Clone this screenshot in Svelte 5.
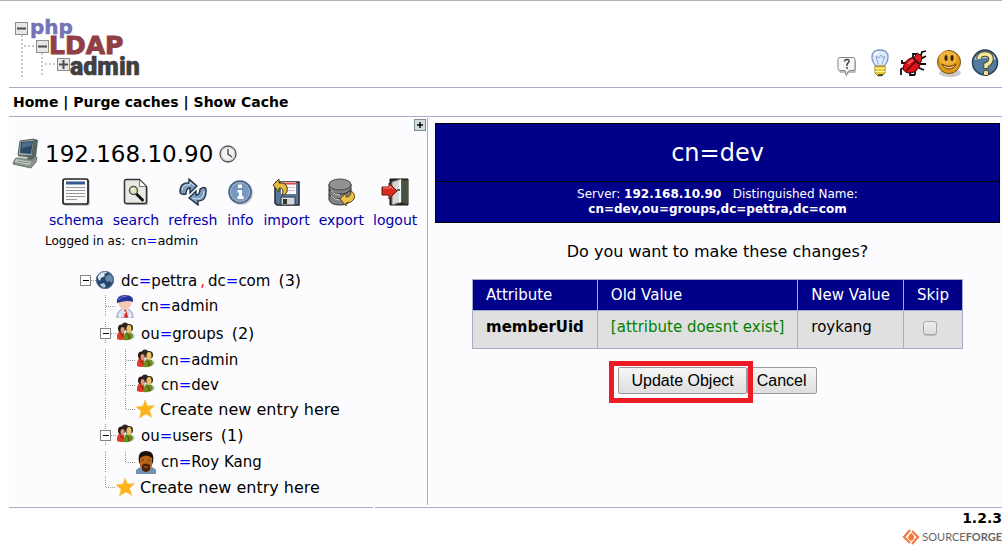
<script>
  const nav = ['Home', 'Purge caches', 'Show Cache'];
  const tools = ['schema', 'search', 'refresh', 'info', 'import', 'export', 'logout'];
  const tree = [
    { lines: ['open-root'], icon: 'globe', parts: ['dc', '=', 'pettra', ',', 'dc', '=', 'com'], count: 3 },
    { lines: ['blank', 'tee'], icon: 'person', parts: ['cn', '=', 'admin'] },
    { lines: ['blank', 'open'], icon: 'group', parts: ['ou', '=', 'groups'], count: 2 },
    { lines: ['blank', 'bar', 'tee'], icon: 'group', parts: ['cn', '=', 'admin'] },
    { lines: ['blank', 'bar', 'tee'], icon: 'group', parts: ['cn', '=', 'dev'] },
    { lines: ['blank', 'bar', 'end'], icon: 'star', parts: ['Create new entry here'] },
    { lines: ['blank', 'open'], icon: 'group', parts: ['ou', '=', 'users'], count: 1 },
    { lines: ['blank', 'bar', 'end'], icon: 'man', parts: ['cn', '=', 'Roy Kang'] },
    { lines: ['blank', 'end'], icon: 'star', parts: ['Create new entry here'] }
  ];
  let skip = $state(false);
</script>

{#snippet treeLine(kind)}
  <svg class="line" viewBox="0 0 20 26" aria-hidden="true">
    <g fill="none" stroke="#999" stroke-dasharray="1 1">
      {#if kind === 'bar' || kind === 'tee'}<path d="M9.500 2v22" />{/if}
      {#if kind === 'end'}<path d="M9.500 2v12" />{/if}
      {#if kind === 'tee' || kind === 'end'}<path d="M10 13.500h10" />{/if}
      {#if kind === 'open'}<path d="M9.500 2v22M15 13.500h5" />{/if}
      {#if kind === 'open-root'}<path d="M15 13.500h5" />{/if}
    </g>
    {#if kind.startsWith('open')}
      <rect x="4.500" y="8.500" width="10" height="10" fill="#fff" stroke="#848484" />
      <path d="M7 13.500h6" stroke="#000" />
    {/if}
  </svg>
{/snippet}

{#snippet treeIcon(kind)}
  <svg class="entry-icon" viewBox="1 0 20 24" aria-hidden="true">
    {#if kind === 'globe'}
      <circle cx="10" cy="12" r="9" fill="#24456f" />
      <path d="M3 8q3-5 8-5l1 2-3 1 1 2-4 2-1 3-2-2z" fill="#dce8f1" />
      <path d="M11 8l4-2 3 4-1 5-3-2-2 1-2-3z" fill="#6689ae" />
      <path d="M5 16l4-1 2 3-2 2-3-2z" fill="#a9c3da" />
      <circle cx="10" cy="12" r="8.500" fill="none" stroke="#5b7797" />
    {:else if kind === 'person'}
      <path d="M2 24q0-8 6-9h4q6 1 6 9z" fill="#d8dcef" stroke="#9297bb" />
      <ellipse cx="10" cy="9" rx="6.500" ry="6.500" fill="#f6c9b2" />
      <path d="M2 9q-1-8 8-8t8 7q-5-2-12 0z" fill="#25349b" />
      <path d="M3 6q3-4 9-4" stroke="#7180d5" fill="none" />
      <path d="m9 16h3v3l1 4-2 1-2-1 1-4z" fill="#d22a28" />
      <path d="m7 15 3 4 3-4M5 19v5M15 19v5" fill="none" stroke="#fff" />
    {:else if kind === 'group'}
      <ellipse cx="11" cy="15" rx="9" ry="4" fill="#c9cbc5" />
      <path d="M2 16q0-7 6-6l3 8q-5 2-9 0z" fill="#e33b23" />
      <path d="M9 18q0-7 4-7 5 0 5 5-3 4-9 3z" fill="#64931d" />
      <ellipse cx="6.500" cy="7.500" rx="3.500" ry="4" fill="#2b1713" />
      <ellipse cx="7.500" cy="9" rx="2" ry="3" fill="#df9877" />
      <ellipse cx="10" cy="4" rx="3" ry="2.500" fill="#302520" />
      <ellipse cx="14" cy="7" rx="4" ry="4" fill="#2d241b" />
      <ellipse cx="14" cy="8" rx="2.500" ry="4" fill="#e8c56c" />
      <path d="M5 13q3 0 3 3M12 13q3 1 2 5" stroke="#7c210c" fill="none" />
    {:else if kind === 'star'}
      <path d="m10 3 2.500 6 7-.5-5 5 2.500 7-6-3.500-6.500 4 1.500-7-5-4 7-1z" fill="#fbb21b" stroke="#ffc95f" stroke-width=".7" />
    {:else}
      <path d="M1 24v-4q3-3 6-3h8q4 0 6 3v4z" fill="#758eb6" />
      <path d="M4 12q-2-11 7-11t7 11l-2 5H6z" fill="#17100c" />
      <path d="M5 8q6-5 12 0v8q-3 6-6 6t-6-6z" fill="#b96519" />
      <path d="M7 15q4-3 8 0v5q-4 4-8 0z" fill="#4d230d" />
      <path d="M9 17h4" stroke="#c16a28" /><path d="M7 10h2M13 10h2" stroke="#5c2b0c" />
    {/if}
  </svg>
{/snippet}

{#snippet toolIcon(kind)}
  <svg width="28" height="28" viewBox="0 0 28 28" aria-hidden="true">
    {#if kind === 'schema'}
      <rect x="2" y="2" width="26" height="26" rx="2" fill="#c9c9ce" />
      <rect x="1" y="1" width="25" height="25" rx="2" fill="#f8f8f8" stroke="#222" stroke-width="1.700" />
      <path d="M4 5h19" stroke="#365b91" stroke-width="3" />
      <path d="M4 9.500h19M4 12.500h19M4 15.500h19M4 18.500h19M4 21.500h11" stroke="#999" />
    {:else if kind === 'search'}
      <path d="M3 2h15l7 7v17H3z" fill="#bbb" transform="translate(1 1)" />
      <path d="M2.500 3.500q0-2 2-2h13l7 7v15q0 2-2 2h-18q-2 0-2-2z" fill="#e8e8e3" stroke="#333" stroke-width="1.500" />
      <path d="M17.500 2v6.500H24" fill="#fff" stroke="#777" />
      <path d="m14.500 16 6 6" stroke="#111" stroke-width="3" stroke-linecap="round" />
      <circle cx="11.500" cy="12.500" r="4" fill="#dde4b6" stroke="#555" stroke-width="1.500" />
      <path d="M9 12q0-2 3-2" fill="none" stroke="#fff" />
    {:else if kind === 'refresh'}
      <path d="M1 14Q1 4 10 5V1l8 7-7 7v-5q-4 0-4 6-6 1-6-2z" fill="#7c9dbf" stroke="#1c2c3d" stroke-width="1.300" />
      <path d="M27 11q1 12-8 12v4l-9-7 7-7v4q4 0 4-6 5-3 6 0z" fill="#7c9dbf" stroke="#1c2c3d" stroke-width="1.300" />
      <path d="M3 12q1-6 8-5V4l4 4M25 13q0 8-7 8l-5-1" fill="none" stroke="#cedeeb" />
    {:else if kind === 'info'}
      <circle cx="15" cy="15" r="12" fill="#c4c6ca" />
      <circle cx="14" cy="14" r="11" fill="#7897bf" stroke="#45617f" stroke-width="1.500" />
      <circle cx="14" cy="14" r="9.500" fill="none" stroke="#9ab3d2" />
      <rect x="12" y="6.500" width="4" height="3.500" rx="1" fill="#fff" />
      <path d="M11.500 12h4.500v6h1.500v3h-6v-3h1.500v-3.500h-1.500z" fill="#fff" />
    {:else if kind === 'import'}
      <path d="M3 4h23v23H4l-2-2V6z" fill="#55779e" stroke="#20262d" stroke-width="1.500" />
      <path d="M8 4h15v12H8z" fill="#fafafa" /><path d="M9 5.500h14" stroke="#e24747" stroke-width="2" />
      <path d="M9 9.500h13M9 12.500h13" stroke="#c6c6ca" />
      <path d="M8 19h14v8H8z" fill="#d4d6d6" stroke="#2e3840" /><path d="M10 21h4v5h-4z" fill="#333" />
      <path d="M0 7 6 1v4q10-1 8 9-2 4-5 3 3-7-3-7v4z" fill="#e3b943" stroke="#493612" />
    {:else if kind === 'export'}
      <path d="M2 6v16q2 5 11 5t11-5V6z" fill="#828282" stroke="#333" />
      <path d="M2 11q3 5 11 5t11-5M2 16q3 5 11 5t11-5" fill="none" stroke="#3c3c3c" stroke-width="1.300" />
      <path d="M4 13q4 4 9 4M4 18q4 4 9 4" fill="none" stroke="#d0d0d0" />
      <ellipse cx="13" cy="6.500" rx="11" ry="5.500" fill="#929292" stroke="#444" />
      <path d="M13 21l6-6v4q5 0 5-6 5 3 3 8-2 4-8 4v3z" fill="#eac04c" stroke="#60440e" />
    {:else}
      <path d="M9 1h18v26H9z" fill="#29332b" stroke="#111" />
      <path d="M21 2h6v24l-8-2z" fill="#46533d" />
      <path d="M11 4 20 1v23l-9 3z" fill="#d8d8d8" stroke="#777" />
      <path d="m18 3 2-2v23l-2 1z" fill="#f5f5f5" /><path d="M16 12h3" stroke="#333" stroke-width="1.500" />
      <path d="M1 9h7V5l8 8-8 8v-4H1z" fill="#d52c1e" stroke="#65150e" />
      <path d="M2 10h7V8l3 3" fill="none" stroke="#ff8477" />
    {/if}
  </svg>
{/snippet}

<div class="page">
  <header>
    <svg class="logo" width="140" height="68" viewBox="0 0 140 68" role="img" aria-label="phpLDAPadmin">
      <g stroke="#c8c8c8" stroke-width="2" stroke-dasharray="2 2" fill="none">
        <path d="M13 22v42M33 40v24M15 33h14M36 51h12" />
      </g>
      <g fill="#e6e6e6" stroke="#8c8c8c">
        <rect x="6.500" y="9.500" width="12" height="12" /><rect x="27.500" y="27.500" width="12" height="12" /><rect x="48.500" y="45.500" width="12" height="12" />
      </g>
      <path d="M8 15.500h9M29 33.500h9M50 51.500h9M54.500 47v9" stroke="#4c4c4c" stroke-width="2" />
      <text class="php" x="21" y="21">php</text>
      <text class="ldap" x="40" y="41">LDAP</text>
      <text class="adm" x="61" y="62">admin</text>
    </svg>
    <div class="quick">
      <button aria-label="Request feature">
        <svg width="20" height="28" viewBox="0 0 20 28"><path d="M3 10h14q2 0 2 2v9q0 2-2 2h-5l-3 4-1-4H4q-2 0-2-2v-9z" fill="#bbb" transform="translate(0 1)" /><path d="M3 8.500h13q2 0 2 2v9q0 2-2 2h-4l-3 4-1-4H3q-2 0-2-2v-9q0-2 2-2z" fill="#f6f6f6" stroke="#888" /><path d="M7.500 12.500q0-2 2.500-2t2 2q0 1-2 2.500v2M10 18v2" fill="none" stroke="#444" stroke-width="1.500" /></svg>
      </button>
      <button aria-label="Show hints">
        <svg width="20" height="28" viewBox="0 0 20 28"><path d="M6 17Q2 13 2 8q0-7 8-7t8 7q0 5-4 9z" fill="#dce9fa" stroke="#7898c9" stroke-width="1.300" /><path d="M8 15 6 7l3 2 2-3 2 3 2-2-3 8" fill="none" stroke="#8faad0" /><path d="M5 6q1-3 4-3" stroke="#fff" stroke-width="2" fill="none" /><path d="M5 17h10v7l-3 3H8l-3-3z" fill="#edcc38" stroke="#9f8525" /><path d="M5 19.500h10M5 22.500h10" stroke="#fff09a" /><path d="M8 25h5v2H8z" fill="#55513e" /></svg>
      </button>
      <button aria-label="Report a bug">
        <svg width="28" height="28" viewBox="0 0 28 28"><path d="M8 14H3v-3M7 18l-5 2v6M11 21v5h5M14 9V5h4M20 15h7M18 18l7 3M21 9l2-6 4-1M22 10l5-3M16 20v6" fill="none" stroke="#111" stroke-width="1.800" /><path d="M4 20Q5 10 15 8l6 4q1 7-6 11-8 3-11-3z" fill="#e01019" stroke="#3b080b" /><path d="m15 9 3-5 5 3-1 6-3 2z" fill="#e61c22" stroke="#2b0b0b" /><path d="M7 22 18 11M14 9l6 5" stroke="#420b10" stroke-width="1.300" /><path d="m9 15 5-4" stroke="#ff7a7a" stroke-width="1.500" /></svg>
      </button>
      <button aria-label="Donate">
        <svg width="26" height="28" viewBox="0 0 26 28"><ellipse cx="14" cy="24" rx="11" ry="4" fill="#c8c8c8" /><circle cx="13" cy="13" r="11.500" fill="#e0971c" stroke="#71501b" /><ellipse cx="12" cy="9" rx="9" ry="7" fill="#f0b23a" /><ellipse cx="10" cy="9" rx="1.500" ry="3" fill="#392407" /><ellipse cx="16" cy="9" rx="1.500" ry="3" fill="#392407" /><path d="M6 15q7 5 14 0-2 5-7 5t-7-5z" fill="#f7cf78" stroke="#60400e" /></svg>
      </button>
      <button aria-label="Help">
        <svg width="28" height="28" viewBox="0 0 28 28"><circle cx="14" cy="13.500" r="12.500" fill="#527ba0" stroke="#283f55" stroke-width="1.500" /><path d="M3 11Q7 1 17 3q7 2 8 8-9-4-22 0z" fill="#b9ccdd" /><path d="M8 10q0-5 6-5t6 5q0 4-5 6v4" fill="none" stroke="#4e4a30" stroke-width="5.500" /><path d="M8 10q0-5 6-5t6 5q0 4-5 6v3" fill="none" stroke="#f4e6a1" stroke-width="3.500" /><rect x="12.500" y="21.500" width="5" height="5" rx="1.500" fill="#f4e6a1" stroke="#4e4a30" /></svg>
      </button>
    </div>
  </header>

  <nav>
    {#each nav as item, i}{#if i}<span>&nbsp;|&nbsp;</span>{/if}<a href="#{item.split(' ')[0].toLowerCase()}">{item}</a>{/each}
  </nav>

  <div class="body">
    <aside>
      <button class="expand" aria-label="Expand tree">
        <svg width="12" height="12" viewBox="0 0 12 12"><rect x=".5" y=".5" width="11" height="11" fill="#d3dde0" stroke="#7c8c93" /><path d="M3 6h6M6 3v6" stroke="#000" stroke-width="1.400" /></svg>
      </button>
      <div class="server">
        <svg width="28" height="32" viewBox="0 0 28 32" aria-hidden="true"><path d="m8 3 15-2 3 1-2 17-4 3-14-2z" fill="#59655f" /><path d="m8 3 14-2-2 17-14-1z" fill="#a3ada6" stroke="#58625c" /><path d="m9 4 12-1-2 13-11-1z" fill="#2c4a66" /><path d="m10 5 10-1-1 4q-5 0-9 3z" fill="#4c6d8a" /><path d="m4 20 17 2 4-3-1 5-5 6-18-4 1-3z" fill="#8b958e" stroke="#68736d" /><path d="m4 21 15 3-2 3-14-3zM6 18l10 1-1 2-9-1z" fill="#c5ccc6" /><path d="m5 23 12 2" stroke="#7e8983" /></svg>
        <h2>192.168.10.90</h2>
        <svg width="20" height="20" viewBox="0 0 20 20" aria-hidden="true"><circle cx="10" cy="10" r="8" fill="#f3f3f3" stroke="#555" stroke-width="1.300" /><circle cx="10" cy="10" r="6.500" fill="none" stroke="#ccc" /><path d="M10 5v5l4 3" fill="none" stroke="#555" stroke-width="1.500" /></svg>
      </div>
      <div class="tools">
        {#each tools as tool}
          <a href="#{tool}">{@render toolIcon(tool)}<span>{tool}</span></a>
        {/each}
      </div>
      <p class="login">Logged in as: <a href="#me">cn<i>=</i>admin</a></p>
      <ul>
        {#each tree as row}
          <li class={row.icon} class:folder={row.count}>
            {#each row.lines as line}{@render treeLine(line)}{/each}
            {@render treeIcon(row.icon)}
            <a href="#entry">{#each row.parts as part}{#if part === '='}<i>=</i>{:else if part === ','}<b>,</b>{:else}{part}{/if}{/each}{#if row.count}<span class="count">({row.count})</span>{/if}</a>
          </li>
        {/each}
      </ul>
    </aside>

    <main>
      <h1>cn=dev</h1>
      <p class="subtitle">Server: <strong>192.168.10.90</strong> &nbsp; Distinguished Name:<br /><strong>cn=dev,ou=groups,dc=pettra,dc=com</strong></p>
      <form onsubmit={(e) => e.preventDefault()}>
        <p class="question">Do you want to make these changes?</p>
        <table>
          <thead>
            <tr><th>Attribute</th><th>Old Value</th><th>New Value</th><th>Skip</th></tr>
          </thead>
          <tbody>
            <tr>
              <td><strong>memberUid</strong></td>
              <td class="missing">[attribute doesnt exist]</td>
              <td>roykang</td>
              <td class="skip"><input type="checkbox" aria-label="Skip memberUid" bind:checked={skip} /></td>
            </tr>
          </tbody>
        </table>
        <div class="actions">
          <span class="marked"><button type="submit">Update Object</button></span><button type="button">Cancel</button>
        </div>
      </form>
    </main>
  </div>

  <footer>
    <div class="rule"><span></span><span></span></div>
    <strong>1.2.3</strong>
    <a class="sf" href="#sourceforge">
      <svg width="18" height="18" viewBox="0 0 18 18" aria-hidden="true"><path d="M8 2 2 9l6 6M10 3l6 6-6 7" fill="none" stroke="#f47b3b" stroke-width="2.200" /><path d="M9 5q4 3 3 5-1 3-3 3t-3-3q0-2 3-5z" fill="#f47b3b" /></svg>
      <span>SOURCE<b>FORGE</b></span>
    </a>
  </footer>
</div>

<style>
  :global(body) { background: #fff; }
  .page { font-family: "DejaVu Sans", Verdana, sans-serif; font-size: 15px; color: #000; padding-left: 9px; border-top: 1px solid #b3b3b3; overflow: hidden; }
  h1, h2, p, ul { margin: 0; padding: 0; font-weight: 400; }
  a { color: inherit; text-decoration: none; }
  i { font-style: normal; color: #00f; }
  svg { display: block; flex: none; }
  button { font-family: "Liberation Sans", Arial, sans-serif; }

  header { display: flex; justify-content: space-between; align-items: flex-end; height: 80px; padding: 0 3px 6px 0; border-bottom: 1px solid #aaaacc; }
  .logo .php { font: 700 20px "DejaVu Sans", sans-serif; fill: #7373b5; stroke: #7373b5; stroke-width: .5; }
  .logo .ldap { font: 700 25px "DejaVu Sans", sans-serif; fill: #903f46; stroke: #903f46; stroke-width: 1; }
  .logo .adm { font: 900 25px Roboto, sans-serif; fill: #404040; stroke: #404040; stroke-width: .5; }
  .quick { display: flex; align-items: center; gap: 9px; padding-bottom: 4px; }
  .quick button, .expand { padding: 0; border: 0; background: none; }
  .quick button:first-child { margin-right: 4px; }

  nav { height: 28px; line-height: 28px; padding-left: 4px; font-size: 14px; font-weight: 700; border-bottom: 1px solid #aaaacc; }

  .body { display: grid; grid-template-columns: 419fr 574fr; margin-top: 1px; }
  aside { position: relative; background: #fcfcfe; border-right: 1px solid #aaaacc; padding: 20px 0 6px 3px; }
  .expand { position: absolute; top: 1px; right: 1px; }
  .server { display: flex; align-items: center; gap: 5px; height: 32px; }
  h2 { font-size: 23px; }
  .tools { display: flex; gap: 9px; padding: 8px 0 0 37px; }
  .tools a { display: flex; flex-direction: column; align-items: center; gap: 4px; font-size: 14px; line-height: 20px; color: #0000aa; }
  .login { padding-left: 33px; font-size: 12px; line-height: 22px; }
  .login a { font-size: 13px; padding-left: 2px; }
  ul { list-style: none; padding: 15px 0 0 64px; }
  li { display: flex; align-items: center; height: 26px; }
  li.group { height: 25px; }
  li.group.folder { height: 28px; }
  li.star { height: 24px; }
  li a { padding-left: 5px; white-space: nowrap; }
  li.star a { font-size: 16px; padding-left: 4px; }
  li b { font-weight: 400; color: #f00; padding: 0 3px; }
  .count { font-size: 16px; padding-left: 8px; }
  .line { width: 20px; height: 26px; }
  .entry-icon { width: 20px; height: 24px; }

  main { background: #fcfcfe; padding: 5px 2px 0 7px; text-align: center; }
  h1 { background: #000088; color: #fff; border: 1px solid #000; font-size: 24px; line-height: 56px; padding-top: 1px; }
  .subtitle { background: #000088; color: #fff; border: 1px solid #000; border-top: 0; font-size: 12px; line-height: 15px; padding: 5px 0; }
  .question { font-size: 16px; line-height: 20px; padding: 19px 0 17px; }
  table { margin: 0 auto; border-collapse: collapse; text-align: left; }
  th, td { border: 1px solid #aaaacc; padding: 0 13px; font-weight: 400; line-height: 18px; white-space: nowrap; }
  th { background: #000088; color: #fff; padding-top: 6px; padding-bottom: 6px; }
  td { background: #e0e0e0; padding-top: 7px; padding-bottom: 12px; }
  .missing { color: #008000; }
  .skip { padding-right: 20px; }
  input { appearance: none; display: block; width: 14px; height: 14px; margin: 1px auto 0; border: 1px solid #a8a8a8; border-radius: 3px; background: linear-gradient(#eee, #ddd); box-shadow: 0 1px 1px #bbb; }
  .actions { display: flex; justify-content: center; padding-top: 18px; }
  .actions button { height: 27px; padding: 0 12px; border: 1px solid #9a9a9a; border-radius: 2px; background: linear-gradient(#f6f6f6, #dedede); font-size: 16px; line-height: 24px; }
  .actions > button { padding: 0 9px; }
  .marked { position: relative; z-index: 1; }
  .marked::after { content: ""; position: absolute; inset: -6px -6px -9px -9px; border: 5px solid #ed1c24; pointer-events: none; }

  footer { display: flex; flex-direction: column; align-items: flex-end; }
  .rule { display: grid; grid-template-columns: 364fr 627fr; gap: 2px; width: 100%; padding-top: 2px; }
  .rule span { height: 1px; background: #aaaacc; }
  footer strong { font-size: 14px; line-height: 20px; }
  .sf { display: flex; align-items: center; gap: 2px; font: 400 11px/18px Lato, sans-serif; color: #666; }
  .sf b { font-weight: 700; }
</style>
